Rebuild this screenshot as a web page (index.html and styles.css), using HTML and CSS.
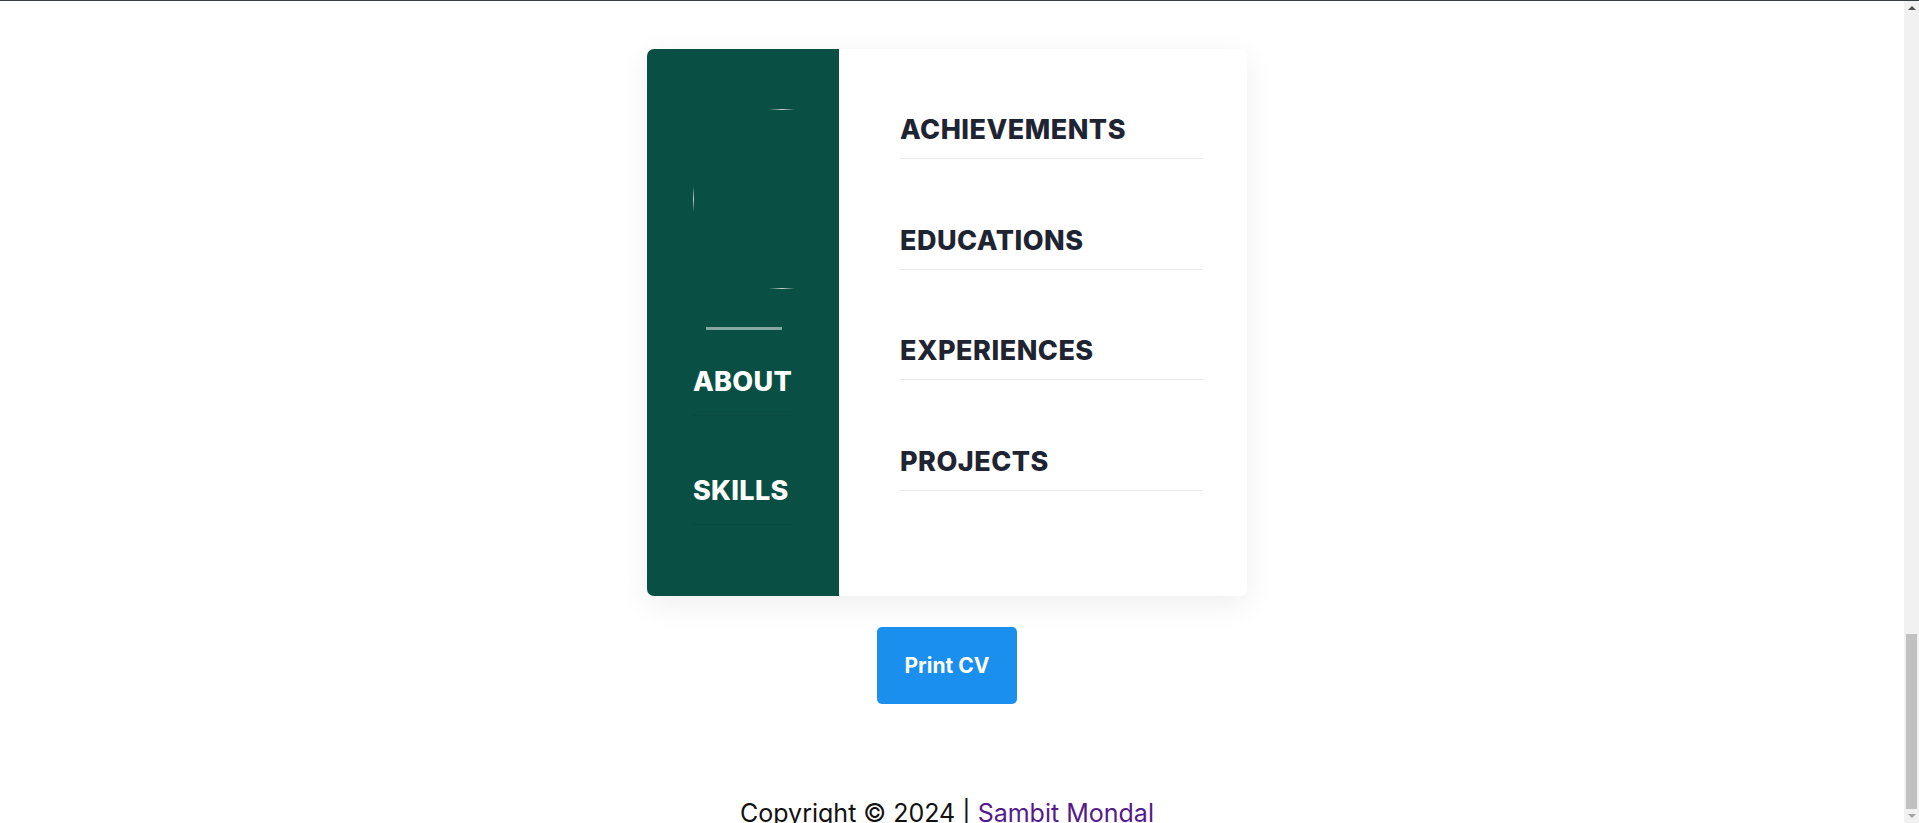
FILE: index.html
```html
<!DOCTYPE html>
<html lang="en">
<head>
<meta charset="utf-8">
<title>CV</title>
<link rel="stylesheet" href="styles.css">
</head>
<body>
<div class="screen">
  <main class="page">
    <section class="card">
      <aside class="side">
        <div class="avatar" aria-label="profile photo">
          <span class="edge edge-top"></span>
          <span class="edge edge-left"></span>
          <span class="edge edge-bottom"></span>
        </div>
        <div class="side-rule"></div>
        <nav class="side-nav">
          <a class="side-link">ABOUT</a>
          <a class="side-link">SKILLS</a>
        </nav>
      </aside>
      <div class="main-col">
        <h2 class="section-title">ACHIEVEMENTS</h2>
        <h2 class="section-title">EDUCATIONS</h2>
        <h2 class="section-title">EXPERIENCES</h2>
        <h2 class="section-title">PROJECTS</h2>
      </div>
    </section>
    <button class="print-btn" type="button">Print CV</button>
    <footer class="footer">Copyright © 2024 | <a class="footer-link">Sambit Mondal</a></footer>
  </main>
  <div class="scrollbar" aria-hidden="true">
    <span class="arrow arrow-up"></span>
    <div class="track"><div class="thumb"></div></div>
    <span class="arrow arrow-down"></span>
  </div>
</div>
</body>
</html>
```
FILE: styles.css
```css
html, body {
  margin: 0;
  padding: 0;
  height: 100%;
  overflow: hidden;
  background: #ffffff;
}
body {
  font-family: "Inter", "Liberation Sans", sans-serif;
}
.screen {
  display: flex;
  height: 823px;
  border-top: 1px solid #374040;
  box-sizing: border-box;
}
.page {
  flex: 1;
  display: flex;
  flex-direction: column;
  align-items: center;
  padding: 48px 10px 0 0;
  overflow: hidden;
}
.card {
  display: flex;
  width: 600px;
  height: 547px;
  border-radius: 7px;
  background: #ffffff;
  box-shadow: 0 8px 30px rgba(0, 0, 0, 0.07);
  overflow: hidden;
  flex-shrink: 0;
}
.side {
  width: 192px;
  flex-shrink: 0;
  background: #0a4f44;
  padding: 60px 0 0 46px;
  box-sizing: border-box;
  overflow: hidden;
}
.avatar {
  position: relative;
  width: 180px;
  height: 180px;
}
.edge {
  position: absolute;
}
.edge-top, .edge-bottom {
  left: 76px;
  width: 26px;
  height: 1px;
  background: linear-gradient(to right, rgba(220,225,220,0), rgba(220,225,220,0.9), rgba(220,225,220,0));
}
.edge-top { top: 0; }
.edge-bottom { bottom: 0; }
.edge-left {
  left: 0;
  top: 77px;
  width: 1px;
  height: 26px;
  background: linear-gradient(to bottom, rgba(220,225,220,0), rgba(220,225,220,0.9), rgba(220,225,220,0));
}
.side-rule {
  width: 76px;
  height: 3px;
  background: #84a7a1;
  margin: 38px 0 0 13px;
}
.side-nav {
  display: flex;
  flex-direction: column;
  width: max-content;
  margin-top: 32px;
}
.side-link {
  display: block;
  color: #ffffff;
  font-size: 27px;
  font-weight: 800;
  letter-spacing: 0.3px;
  line-height: 40px;
  padding-bottom: 13px;
  border-bottom: 1px solid #094a40;
  margin-bottom: 55px;
}
.main-col {
  flex: 1;
  background: #ffffff;
  padding: 61px 44px 0 61px;
}
.section-title {
  margin: 0 0 61.5px;
  color: #1f2433;
  font-size: 27px;
  font-weight: 800;
  letter-spacing: 0.5px;
  line-height: 40px;
  padding-bottom: 8px;
  border-bottom: 1px solid #e8e9ec;
}
.print-btn {
  margin-top: 31px;
  width: 140px;
  height: 77px;
  border: none;
  border-radius: 5px;
  background: #1b8fee;
  color: #ffffff;
  font-family: "Inter", "Liberation Sans", sans-serif;
  font-size: 21px;
  font-weight: 700;
  flex-shrink: 0;
}
.footer {
  margin-top: 94px;
  font-size: 25px;
  color: #111111;
  white-space: nowrap;
}
.footer-link {
  color: #551a8b;
}
.scrollbar {
  width: 15px;
  flex-shrink: 0;
  background: #f1f1f1;
  display: flex;
  flex-direction: column;
  align-items: center;
}
.arrow {
  width: 0;
  height: 0;
  border-left: 4px solid transparent;
  border-right: 4px solid transparent;
  margin: 5px 0;
}
.arrow-up { border-bottom: 4px solid #505050; }
.arrow-down { border-top: 4px solid #a3a3a3; }
.track {
  flex: 1;
  width: 100%;
  display: flex;
  flex-direction: column;
  justify-content: flex-end;
}
.thumb {
  height: 175px;
  margin: 0 2px 0;
  background: #c1c1c1;
}
```
